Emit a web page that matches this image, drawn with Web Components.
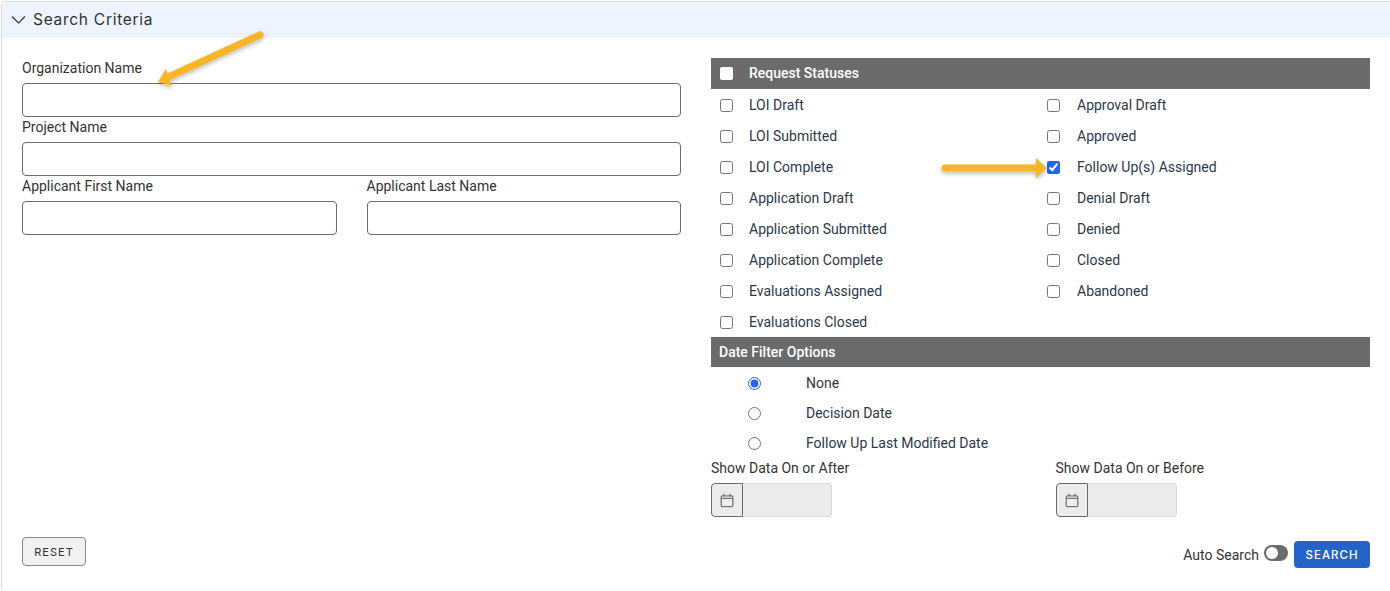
<!DOCTYPE html>
<html><head><meta charset="utf-8">
<style>
html,body{margin:0;padding:0;background:#fff}
body{font-family:Roboto,"Liberation Sans",sans-serif;font-size:14px;color:#333;width:1390px;height:591px;overflow:hidden;position:relative}
</style></head><body>
<search-panel heading="Search Criteria">
  <search-grid>
    <div slot="left">
      <text-field label="Organization Name"></text-field>
      <text-field label="Project Name"></text-field>
      <two-col>
        <text-field label="Applicant First Name"></text-field>
        <text-field label="Applicant Last Name"></text-field>
      </two-col>
    </div>
    <div slot="right">
      <section-bar check>Request Statuses</section-bar>
      <status-list>
        <check-row>LOI Draft</check-row>
        <check-row alt>Approval Draft</check-row>
        <check-row>LOI Submitted</check-row>
        <check-row alt>Approved</check-row>
        <check-row>LOI Complete</check-row>
        <check-row alt checked>Follow Up(s) Assigned</check-row>
        <check-row>Application Draft</check-row>
        <check-row alt>Denial Draft</check-row>
        <check-row>Application Submitted</check-row>
        <check-row alt>Denied</check-row>
        <check-row>Application Complete</check-row>
        <check-row alt>Closed</check-row>
        <check-row>Evaluations Assigned</check-row>
        <check-row alt>Abandoned</check-row>
        <check-row>Evaluations Closed</check-row>
      </status-list>
      <section-bar short>Date Filter Options</section-bar>
      <radio-list>
        <radio-row checked>None</radio-row>
        <radio-row>Decision Date</radio-row>
        <radio-row>Follow Up Last Modified Date</radio-row>
      </radio-list>
      <two-col>
        <date-field label="Show Data On or After"></date-field>
        <date-field label="Show Data On or Before"></date-field>
      </two-col>
    </div>
  </search-grid>
  <footer-bar>
    <action-button slot="start">RESET</action-button>
    <span slot="end" class="auto">Auto Search</span>
    <toggle-switch slot="end"></toggle-switch>
    <action-button slot="end" primary>SEARCH</action-button>
  </footer-bar>
</search-panel>
<note-arrow></note-arrow>
<script>
function def(name, html, init){
  const t=document.createElement('template');t.innerHTML=html;
  customElements.define(name,class extends HTMLElement{
    constructor(){super();this.attachShadow({mode:'open'}).appendChild(t.content.cloneNode(true));}
    connectedCallback(){if(init)init(this,this.shadowRoot);}
  });
}
def('search-panel',`<style>
:host{display:flex;flex-direction:column;box-sizing:border-box;height:590px;margin:1px 0 0 1px;width:1389px;border:1px solid #dcdcdc;border-right:0;border-bottom:0;border-radius:4px 0 0 4px}
.h{display:flex;align-items:center;height:36px;background:#edf4fe;padding:0 0 1px 9px;box-sizing:border-box;gap:7px;font:400 15.5px Inter,sans-serif;letter-spacing:.72px;color:#333;flex:none}
svg{display:block}
.b{flex:1;display:flex;flex-direction:column;padding:20px 20px 0 20px;min-height:0}
</style><div class="h"><svg width="15" height="15" viewBox="0 0 15 15" fill="none" stroke="#333" stroke-width="1.1"><path d="M1 4.500l6.500 6.500L14 4.500"/></svg><span id="t"></span></div><div class="b"><slot></slot></div>`,
(el,s)=>{s.getElementById('t').textContent=el.getAttribute('heading')});
def('search-grid',`<style>:host{display:grid;grid-template-columns:659px 659px;column-gap:30px;height:459px;flex:none}</style><slot name="left"></slot><slot name="right"></slot>`);
def('two-col',`<style>:host{display:grid;grid-template-columns:1fr 1fr;column-gap:30px}</style><slot></slot>`);
def('text-field',`<style>:host{display:block;height:59px}
label{display:block;height:25px;line-height:21px;color:#333}
input{display:block;box-sizing:border-box;width:100%;height:34px;border:1px solid #6b6b6b;border-radius:4px;background:#fff;margin:0;padding:0 8px;outline:0}
</style><label id="l"></label><input type="text">`,
(el,s)=>{s.getElementById('l').textContent=el.getAttribute('label')});
def('section-bar',`<style>:host{display:flex;align-items:center;box-sizing:border-box;height:31px;background:#6b6b6b;color:#fff;font-weight:500;font-size:14px;padding:0 0 1px 8px}
:host([short]){height:30px;padding-bottom:0}
.c{width:13px;height:13px;background:#fff;border-radius:2px;margin:1px 16px 0 1px}
.c[hidden]{display:none}
</style><span class="c" id="c" hidden></span><slot></slot>`,
(el,s)=>{if(el.hasAttribute('check'))s.getElementById('c').hidden=false});
def('status-list',`<style>:host{display:grid;grid-template-columns:328px 1fr;grid-auto-rows:31px;box-sizing:border-box;height:248px;padding-top:1px}</style><slot></slot>`);
def('check-row',`<style>:host{display:flex;align-items:center;padding-left:9px;color:#2d3748}
:host([alt]){padding-left:8px}
input{width:13px;height:13px;margin:0 16px 0 0;accent-color:#2563eb;flex:none}
:host([alt]) input{margin-right:17px}
.t{margin-bottom:2px}
</style><input type="checkbox" id="i"><span class="t"><slot></slot></span>`,
(el,s)=>{s.getElementById('i').checked=el.hasAttribute('checked')});
def('radio-list',`<style>:host{display:block;padding-top:1px}</style><slot></slot>`);
def('radio-row',`<style>:host{display:flex;align-items:center;height:30px;padding-left:37px;color:#2d3748}
input{width:13px;height:13px;margin:0 45px 0 0;accent-color:#2563eb;flex:none}
</style><input type="radio" name="d" id="i"><slot></slot>`,
(el,s)=>{s.getElementById('i').checked=el.hasAttribute('checked')});
def('date-field',`<style>:host{display:block}
label{display:block;height:25px;line-height:20px;color:#333}
.g{display:flex;width:121px;height:34px}
.a{box-sizing:border-box;width:32px;border:1px solid #6b6b6b;border-radius:4px 0 0 4px;background:#ececec;display:flex;align-items:center;justify-content:center;flex:none}
.v{flex:1;background:#ececec;border:1px solid #d8d8d8;border-left:0;border-radius:0 4px 4px 0}
</style><label id="l"></label><div class="g"><div class="a"><svg width="14" height="15" viewBox="0 0 14 15" fill="none" stroke="#777" stroke-width="1.3"><rect x="1.200" y="2.800" width="11.600" height="10.800" rx="1"/><path d="M1.200 5.400h11.600M4 .8v2.400M10 .8v2.400"/></svg></div><div class="v"></div></div>`,
(el,s)=>{s.getElementById('l').textContent=el.getAttribute('label')});
def('footer-bar',`<style>:host{display:flex;justify-content:space-between;align-items:flex-start;padding-top:20px;flex:none}
.s,.e{display:flex;align-items:center}
.e{padding-top:4px}
::slotted(.auto){margin-right:5px;color:#333}
</style><div class="s"><slot name="start"></slot></div><div class="e"><slot name="end"></slot></div>`);
def('action-button',`<style>:host{display:inline-flex;align-items:center;justify-content:center;box-sizing:border-box;width:64px;height:29px;border:1px solid #8a8a8a;border-radius:4px;background:#f1f1f1;color:#333;font:400 11px Inter,sans-serif;letter-spacing:1px}
:host([primary]){width:76px;height:27px;background:#2563c9;border:0;color:#fff;margin-left:6px;font-weight:500;font-size:11.5px}
</style><slot></slot>`);
def('toggle-switch',`<style>:host{display:block;width:24px;height:16px;border-radius:8px;background:#6b6b6b;position:relative;top:-2px}
i{position:absolute;left:2px;top:2px;width:12px;height:12px;border-radius:50%;background:#fff}
</style><i></i>`);
def('note-arrow',`<style>:host{position:absolute;left:0;top:0;display:block;width:1390px;height:591px;pointer-events:none}
svg{display:block}
</style><svg width="1390" height="591" fill="none"><defs><filter id="f" x="-10%" y="-30%" width="120%" height="170%"><feDropShadow dx="0" dy="2" stdDeviation="2" flood-color="#000" flood-opacity=".28"/></filter></defs>
<g filter="url(#f)" fill="#f9b52c"><path d="M260 35L166 78" stroke="#f9b52c" stroke-width="7" stroke-linecap="round"/><path d="M158 82L166 69L172 86Z"/></g>
<g filter="url(#f)" fill="#f9b52c"><path d="M945 168H1037" stroke="#f9b52c" stroke-width="7" stroke-linecap="round"/><path d="M1047 168L1036 158V178Z"/></g></svg>`);
</script></body></html>
